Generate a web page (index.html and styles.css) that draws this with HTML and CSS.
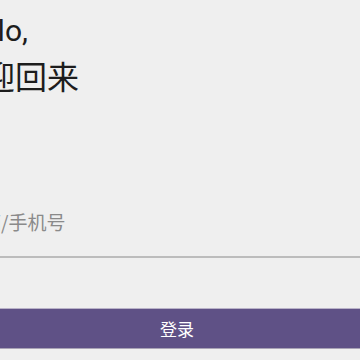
FILE: index.html
```html
<!DOCTYPE html>
<html lang="zh">
<head>
<meta charset="utf-8">
<link rel="stylesheet" href="styles.css">
</head>
<body>
<div class="page">
  <div class="title">
    <div class="title-line title-hello">Hello,</div>
    <div class="title-line">欢迎回来</div>
  </div>
  <div class="field">
    <input class="field-input" type="text" placeholder="邮箱/手机号">
  </div>
  <button class="login-btn" type="button">登录</button>
</div>
</body>
</html>
```

FILE: styles.css
```css
html, body {
  margin: 0;
  padding: 0;
  background: #efefef;
  overflow: hidden;
  width: 360px;
  height: 360px;
}
.page {
  margin-left: -49px;
  width: 452px;
  font-family: "Noto Sans CJK SC", Roboto, sans-serif;
  display: flex;
  flex-direction: column;
}
.title {
  padding-top: 9px;
  color: #1d1d1d;
}
.title-line {
  font-size: 32px;
  line-height: 44px;
}
.title-hello {
  font-family: Roboto, "Noto Sans CJK SC", sans-serif;
  font-size: 30px;
  padding-left: 2px;
}
.field {
  margin-top: 89px;
  border-bottom: 2px solid #bcbcbc;
}
.field-input {
  display: block;
  width: 100%;
  box-sizing: border-box;
  border: none;
  outline: none;
  background: transparent;
  font-family: "Noto Sans CJK SC", Roboto, sans-serif;
  font-size: 19px;
  height: 70px;
  padding: 0 0 0 12px;
  color: #333;
}
.field-input::placeholder {
  color: #8a8a8a;
}
.login-btn {
  margin-top: 50px;
  height: 41px;
  border: none;
  border-top: 1px solid #b9b2c8;
  border-bottom: 1px solid #a9a3b6;
  background: #5f5186;
  color: #ffffff;
  font-family: "Noto Sans CJK SC", Roboto, sans-serif;
  font-size: 17px;
  padding: 0;
  width: 100%;
}
```
